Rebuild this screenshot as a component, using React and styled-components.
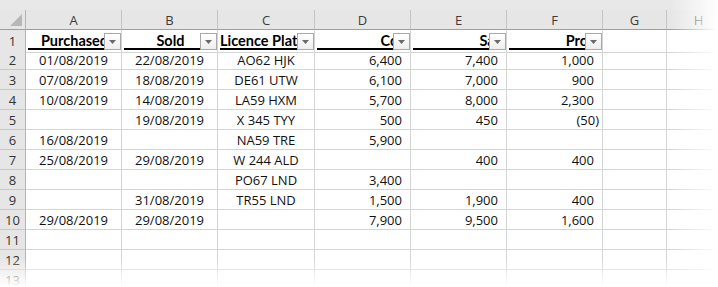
import styled, { createGlobalStyle } from "styled-components"

const GlobalStyle = createGlobalStyle`
    html, body {
        margin: 0;
        padding: 0;
        background: #ffffff;
        overflow: hidden;
    }
    body {
        font-family: "Open Sans", "Liberation Sans", sans-serif;
    }
`

const columns = ["A", "B", "C", "D", "E", "F", "G", "H"]
const widths = [96, 96, 97, 96, 96, 96, 64, 64]

const headers = [
    { label: "Purchased", align: "center" },
    { label: "Sold", align: "center" },
    { label: "Licence Plate", align: "left" },
    { label: "Cost", align: "right" },
    { label: "Sale", align: "right" },
    { label: "Profit", align: "right" },
]

const rows = [
    ["01/08/2019", "22/08/2019", "AO62 HJK", "6,400", "7,400", "1,000"],
    ["07/08/2019", "18/08/2019", "DE61 UTW", "6,100", "7,000", "900"],
    ["10/08/2019", "14/08/2019", "LA59 HXM", "5,700", "8,000", "2,300"],
    ["", "19/08/2019", "X 345 TYY", "500", "450", "(50)"],
    ["16/08/2019", "", "NA59 TRE", "5,900", "", ""],
    ["25/08/2019", "29/08/2019", "W 244 ALD", "", "400", "400"],
    ["", "", "PO67 LND", "3,400", "", ""],
    ["", "31/08/2019", "TR55 LND", "1,500", "1,900", "400"],
    ["29/08/2019", "29/08/2019", "", "7,900", "9,500", "1,600"],
    ["", "", "", "", "", ""],
    ["", "", "", "", "", ""],
    ["", "", "", "", "", ""],
]

const alignFor = (col) => (col < 3 ? "center" : "right")

const App = () => {
    return (
        <Page>
            <GlobalStyle />
            <TopStrip />
            <Sheet>
                <Corner>
                    <CornerMark />
                </Corner>
                {columns.map((c) => (
                    <ColHead key={c}>{c}</ColHead>
                ))}

                <RowHead $tall>1</RowHead>
                {headers.map((h) => (
                    <HeaderCell key={h.label}>
                        <HeaderLabel $align={h.align}>
                            <span>{h.label}</span>
                        </HeaderLabel>
                        <FilterButton>
                            <svg width="7" height="4" viewBox="0 0 7 4">
                                <path d="M0 0 H7 L3.5 4 Z" fill="#6a6a6a" />
                            </svg>
                        </FilterButton>
                    </HeaderCell>
                ))}
                <Cell $tall />
                <Cell $tall />

                {rows.map((row, i) => (
                    <Row key={i} n={i + 2} row={row} />
                ))}
            </Sheet>
            <Fade />
        </Page>
    )
}

const Row = ({ n, row }) => (
    <>
        <RowHead>{n}</RowHead>
        {row.map((v, j) => (
            <Cell key={j} $align={alignFor(j)} $paren={v.startsWith("(")}>
                {v}
            </Cell>
        ))}
        <Cell />
        <Cell />
    </>
)

export default App

const justify = (align) =>
    align === "right" ? "flex-end" : align === "center" ? "center" : "flex-start"

const Page = styled.div`
    position: relative;
    width: 718px;
    height: 287px;
    overflow: hidden;
`

const TopStrip = styled.div`
    height: 10px;
    background: #e8e8e8;
`

const Sheet = styled.div`
    display: grid;
    grid-template-columns: 26px ${widths.map((w) => w + "px").join(" ")};
    grid-auto-rows: 20px;
    font-size: 13px;
    color: #111111;
`

const Corner = styled.div`
    position: relative;
    background: #e6e6e6;
    border-right: 1px solid #b4b4b4;
    border-bottom: 1px solid #9e9e9e;
`

const CornerMark = styled.div`
    position: absolute;
    right: 3px;
    bottom: 3px;
    width: 0;
    height: 0;
    border-left: 12px solid transparent;
    border-bottom: 12px solid #b7b7b7;
`

const ColHead = styled.div`
    display: flex;
    align-items: center;
    justify-content: center;
    background: #e6e6e6;
    border-right: 1px solid #c4c4c4;
    border-bottom: 1px solid #9e9e9e;
    color: #3c3c3c;
    font-size: 13px;
`

const RowHead = styled.div`
    display: flex;
    align-items: center;
    justify-content: center;
    height: ${(p) => (p.$tall ? "23px" : "20px")};
    box-sizing: border-box;
    background: #e6e6e6;
    border-right: 1px solid #b4b4b4;
    border-bottom: 1px solid #c8c8c8;
    color: #333333;
    font-size: 13px;
`

const Cell = styled.div`
    display: flex;
    align-items: center;
    justify-content: ${(p) => justify(p.$align)};
    height: ${(p) => (p.$tall ? "23px" : "20px")};
    box-sizing: border-box;
    padding: 0
        ${(p) => (p.$align === "right" ? (p.$paren ? "3px" : "8px") : "3px")}
        0 3px;
    border-right: 1px solid #d4d4d4;
    border-bottom: 1px solid #d4d4d4;
    white-space: nowrap;
    overflow: hidden;
`

const HeaderCell = styled.div`
    position: relative;
    height: 23px;
    box-sizing: border-box;
    padding: 0 0 2px 2px;
    display: flex;
    border-right: 1px solid #d4d4d4;
    border-bottom: 1px solid #d4d4d4;
    overflow: hidden;
`

const HeaderLabel = styled.div`
    flex: 1;
    min-width: 0;
    display: flex;
    align-items: center;
    justify-content: ${(p) => justify(p.$align)};
    padding-top: 2px;
    border-bottom: 2px solid #000000;
    font-family: Lato, "Open Sans", sans-serif;
    font-weight: 700;
    font-size: 14.5px;
    color: #000000;
    white-space: nowrap;
    overflow: hidden;

    & > span {
        flex: none;
    }
`

const FilterButton = styled.div`
    position: absolute;
    top: 3px;
    right: 0;
    width: 17px;
    height: 17px;
    box-sizing: border-box;
    display: flex;
    align-items: center;
    justify-content: center;
    border: 1px solid #a9a9a9;
    background: linear-gradient(#ffffff, #eeeeee);
`

const Fade = styled.div`
    position: absolute;
    inset: 0;
    pointer-events: none;
    background:
        linear-gradient(to right, rgba(255, 255, 255, 0) 670px, rgba(255, 255, 255, 1) 718px),
        linear-gradient(to bottom, rgba(255, 255, 255, 0) 258px, rgba(255, 255, 255, 1) 287px);
`
